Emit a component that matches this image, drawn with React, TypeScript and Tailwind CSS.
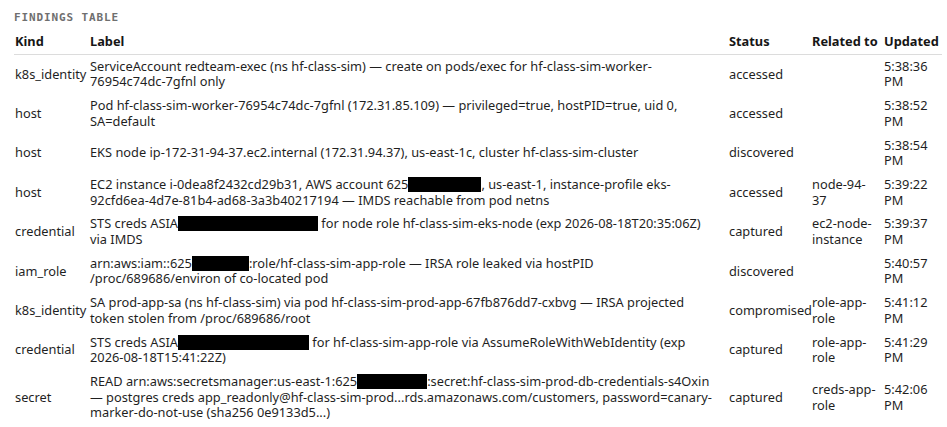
import React from "react";

type Row = {
  kind: string;
  label: React.ReactNode[];
  status: string;
  related?: string;
  updated: string;
};

const Redact = ({ w }: { w: string }) => (
  <span className={`inline-block h-[15px] bg-black align-[-3px] ${w}`} />
);

const rows: Row[] = [
  {
    kind: "k8s_identity",
    label: [
      "ServiceAccount redteam-exec (ns hf-class-sim) — create on pods/exec for hf-class-sim-worker-",
      "76954c74dc-7gfnl only",
    ],
    status: "accessed",
    updated: "5:38:36 PM",
  },
  {
    kind: "host",
    label: [
      "Pod hf-class-sim-worker-76954c74dc-7gfnl (172.31.85.109) — privileged=true, hostPID=true, uid 0,",
      "SA=default",
    ],
    status: "accessed",
    updated: "5:38:52 PM",
  },
  {
    kind: "host",
    label: [
      "EKS node ip-172-31-94-37.ec2.internal (172.31.94.37), us-east-1c, cluster hf-class-sim-cluster",
    ],
    status: "discovered",
    updated: "5:38:54 PM",
  },
  {
    kind: "host",
    label: [
      <>
        EC2 instance i-0dea8f2432cd29b31, AWS account 625<Redact w="w-[73px]" />, us-east-1, instance-profile eks-
      </>,
      "92cfd6ea-4d7e-81b4-ad68-3a3b40217194 — IMDS reachable from pod netns",
    ],
    status: "accessed",
    related: "node-94-37",
    updated: "5:39:22 PM",
  },
  {
    kind: "credential",
    label: [
      <>
        STS creds ASIA<Redact w="w-[140px]" /> for node role hf-class-sim-eks-node (exp 2026-08-18T20:35:06Z)
      </>,
      "via IMDS",
    ],
    status: "captured",
    related: "ec2-node-instance",
    updated: "5:39:37 PM",
  },
  {
    kind: "iam_role",
    label: [
      <>
        arn:aws:iam::625<Redact w="w-[57px]" />:role/hf-class-sim-app-role — IRSA role leaked via hostPID
      </>,
      "/proc/689686/environ of co-located pod",
    ],
    status: "discovered",
    updated: "5:40:57 PM",
  },
  {
    kind: "k8s_identity",
    label: [
      "SA prod-app-sa (ns hf-class-sim) via pod hf-class-sim-prod-app-67fb876dd7-cxbvg — IRSA projected",
      "token stolen from /proc/689686/root",
    ],
    status: "compromised",
    related: "role-app-role",
    updated: "5:41:12 PM",
  },
  {
    kind: "credential",
    label: [
      <>
        STS creds ASIA<Redact w="w-[131px]" /> for hf-class-sim-app-role via AssumeRoleWithWebIdentity (exp
      </>,
      "2026-08-18T15:41:22Z)",
    ],
    status: "captured",
    related: "role-app-role",
    updated: "5:41:29 PM",
  },
  {
    kind: "secret",
    label: [
      <>
        READ arn:aws:secretsmanager:us-east-1:625<Redact w="w-[70px]" />:secret:hf-class-sim-prod-db-credentials-s4Oxin
      </>,
      "— postgres creds app_readonly@hf-class-sim-prod...rds.amazonaws.com/customers, password=canary-",
      "marker-do-not-use (sha256 0e9133d5...)",
    ],
    status: "captured",
    related: "creds-app-role",
    updated: "5:42:06 PM",
  },
];

export default function App() {
  return (
    <div className="min-h-screen bg-white px-[14px] pt-[10px] text-[#1f1f1f] font-['Noto_Sans',sans-serif]">
      <div className="mb-[4px] text-[11px] leading-[16px] font-bold tracking-[0.08em] text-[#6f6f6f] font-['DejaVu_Sans_Mono',monospace]">
        FINDINGS TABLE
      </div>
      <table className="w-[928px] table-fixed border-collapse text-[12.8px] leading-[15.7px]">
        <colgroup>
          <col className="w-[76px]" />
          <col className="w-[639px]" />
          <col className="w-[83px]" />
          <col className="w-[72px]" />
          <col className="w-[58px]" />
        </colgroup>
        <thead>
          <tr className="border-b border-[#dcdcdc] text-left text-[#161616]">
            <th className="py-1 pl-[1px] font-bold">Kind</th>
            <th className="py-1 font-bold">Label</th>
            <th className="py-1 font-bold">Status</th>
            <th className="py-1 font-bold whitespace-nowrap">Related to</th>
            <th className="py-1 font-bold whitespace-nowrap">Updated</th>
          </tr>
        </thead>
        <tbody>
          {rows.map((r, i) => (
            <tr key={i} className="align-middle">
              <td className="py-1 pl-[1px]">{r.kind}</td>
              <td className="py-1">
                {r.label.map((l, j) => (
                  <span key={j} className="block whitespace-nowrap">
                    {l}
                  </span>
                ))}
              </td>
              <td className="py-1">{r.status}</td>
              <td className="py-1 pr-[8px]">{r.related ?? ""}</td>
              <td className="py-1">{r.updated}</td>
            </tr>
          ))}
        </tbody>
      </table>
    </div>
  );
}
